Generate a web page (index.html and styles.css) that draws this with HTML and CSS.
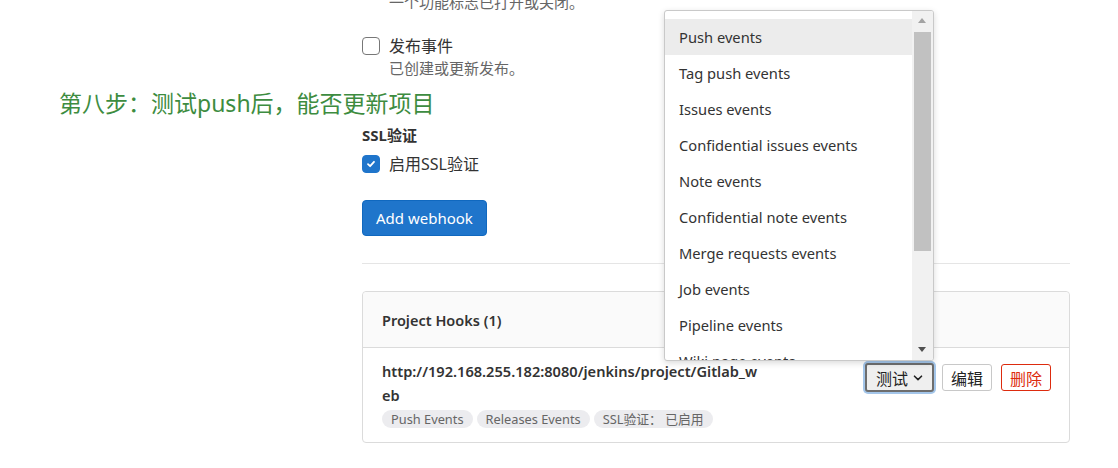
FILE: index.html
```html
<!DOCTYPE html>
<html lang="zh-CN">
<head>
<meta charset="utf-8">
<title>Webhooks</title>
<link rel="stylesheet" href="styles.css">
</head>
<body>
<div class="page">
  <div class="col">
    <p class="help top-cut">一个功能标志已打开或关闭。</p>
    <label class="check-row">
      <span class="cb"></span>
      <span class="cb-text">
        <span class="lbl">发布事件</span>
        <span class="help">已创建或更新发布。</span>
      </span>
    </label>
    <div class="section-title">SSL验证</div>
    <label class="check-row ssl">
      <span class="cb checked">
        <svg width="10" height="10" viewBox="0 0 10 10"><path d="M2 5.2 L4.1 7.2 L8 2.8" fill="none" stroke="#fff" stroke-width="1.8" stroke-linecap="round" stroke-linejoin="round"/></svg>
      </span>
      <span class="cb-text"><span class="lbl">启用SSL验证</span></span>
    </label>
    <div class="actions"><button class="btn-primary">Add webhook</button></div>
    <hr class="divider">
    <div class="card">
      <div class="card-header">Project Hooks (1)</div>
      <div class="card-body">
        <div class="hook-info">
          <div class="hook-url">http://192.168.255.182:8080/jenkins/project/Gitlab_w<br>eb</div>
          <div class="badges">
            <span class="badge">Push Events</span>
            <span class="badge">Releases Events</span>
            <span class="badge">SSL验证： 已启用</span>
          </div>
        </div>
        <div class="hook-buttons">
          <span class="btn-select">测试
            <svg width="10" height="6" viewBox="0 0 10 6"><path d="M1.5 1.2 L5 4.6 L8.5 1.2" fill="none" stroke="#222" stroke-width="1.6" stroke-linecap="round" stroke-linejoin="round"/></svg>
          </span>
          <button class="btn-sm">编辑</button>
          <button class="btn-sm danger">删除</button>
        </div>
      </div>
    </div>
  </div>

  <h2 class="note">第八步：测试push后，能否更新项目</h2>

  <div class="dropdown">
    <ul class="dd-list">
      <li class="active">Push events</li>
      <li>Tag push events</li>
      <li>Issues events</li>
      <li>Confidential issues events</li>
      <li>Note events</li>
      <li>Confidential note events</li>
      <li>Merge requests events</li>
      <li>Job events</li>
      <li>Pipeline events</li>
      <li>Wiki page events</li>
    </ul>
    <div class="scrollbar">
      <span class="arrow up"></span>
      <span class="thumb"></span>
      <span class="arrow down"></span>
    </div>
  </div>
</div>
</body>
</html>
```

FILE: styles.css
```css
* { box-sizing: border-box; }
html, body { margin: 0; padding: 0; background: #fff; }
body {
  font-family: "Noto Sans", "Noto Sans CJK SC", sans-serif;
  color: #333;
  font-size: 14px;
  width: 1118px;
  height: 468px;
  overflow: hidden;
}
.page { position: relative; width: 1118px; height: 468px; }

.col {
  margin-left: 362px;
  width: 708px;
  display: flex;
  flex-direction: column;
}

.help { color: #666; font-size: 15px; line-height: 22px; margin: 0; }
.top-cut { margin-top: -9px; padding-left: 27px; }

.check-row { display: flex; align-items: flex-start; gap: 9px; margin-top: 22px; }
.check-row.ssl { margin-top: 7px; }
.cb {
  width: 18px; height: 18px; margin-top: 2px;
  border: 1.5px solid #777;
  border-radius: 4px;
  background: #fff;
  display: flex; align-items: center; justify-content: center;
  flex: none;
}
.cb.checked { background: #1f75cb; border-color: #1f75cb; }
.cb-text { display: flex; flex-direction: column; }
.lbl { font-size: 16px; line-height: 22px; color: #333; }

.section-title { font-weight: 700; font-size: 15px; line-height: 22px; margin-top: 45px; color: #333; }

.actions { margin-top: 25px; display: flex; }
.btn-primary {
  font-family: inherit;
  height: 36px;
  padding: 0 13px;
  background: #1f75cb;
  border: 1px solid #1068bf;
  border-radius: 4px;
  color: #fff;
  font-size: 15px;
}

.divider { border: 0; border-top: 1px solid #e5e5e5; margin: 27px 0 0; }

.card {
  margin-top: 27px;
  border: 1px solid #dbdbdb;
  border-radius: 4px;
  display: flex; flex-direction: column;
}
.card-header {
  height: 56px;
  background: #fafafa;
  border-bottom: 1px solid #dbdbdb;
  padding: 0 19px;
  display: flex; align-items: center;
  font-weight: 600;
  font-size: 14.5px;
  color: #333;
  border-radius: 4px 4px 0 0;
}
.card-body {
  display: flex;
  justify-content: space-between;
  align-items: flex-start;
  padding: 11px 18px 14px 19px;
}
.hook-url { font-weight: 600; font-size: 14.6px; line-height: 24px; color: #333; }
.badges { display: flex; gap: 4px; margin-top: 3px; }
.badge {
  background: #ececef;
  color: #666;
  font-size: 12.8px;
  line-height: 18px;
  padding: 0 9px;
  border-radius: 9px;
}
.hook-buttons { display: flex; align-items: center; gap: 8px; margin-top: 4px; }
.btn-select {
  display: inline-flex; align-items: center; gap: 5px;
  height: 29px;
  padding: 0 9px;
  background: #efefef;
  border: 2px solid #6e6e6e;
  border-radius: 3px;
  box-shadow: 0 0 0 2px #a4c6ea;
  font-size: 16px; color: #222;
}
.btn-sm {
  font-family: inherit;
  height: 27px;
  padding: 0 8px;
  background: #fff;
  border: 1px solid #c8c8c8;
  border-radius: 3px;
  font-size: 16px;
  color: #222;
}
.btn-sm.danger { border-color: #dd2b0e; color: #dd2b0e; margin-left: 1px; }

.note {
  position: absolute;
  left: 59px; top: 87px;
  margin: 0;
  font-weight: 400;
  font-size: 23px;
  line-height: 32px;
  color: #3d8c40;
}

.dropdown {
  position: absolute;
  left: 664px; top: 10px;
  width: 270px; height: 351px;
  border: 1px solid #c9c9c9;
  border-radius: 3px;
  background: #fff;
  box-shadow: 0 2px 6px rgba(0,0,0,0.15);
  overflow: hidden;
  display: flex;
}
.dd-list { list-style: none; margin: 0; padding: 8px 0 0; flex: 1; }
.dd-list li {
  height: 36px;
  padding-left: 14px;
  display: flex; align-items: center;
  font-size: 14.7px;
  color: #333;
}
.dd-list li.active { background: #ececec; }
.scrollbar {
  width: 21px;
  background: #f1f1f1;
  position: relative;
  flex: none;
}
.thumb {
  position: absolute;
  left: 2px; right: 2px;
  top: 21px; height: 219px;
  background: #c1c1c1;
}
.arrow {
  position: absolute;
  left: 6px;
  width: 0; height: 0;
  border-left: 4.5px solid transparent;
  border-right: 4.5px solid transparent;
}
.arrow.up { top: 7px; border-bottom: 5px solid #a3a3a3; }
.arrow.down { bottom: 8px; border-top: 5px solid #505050; }
```
